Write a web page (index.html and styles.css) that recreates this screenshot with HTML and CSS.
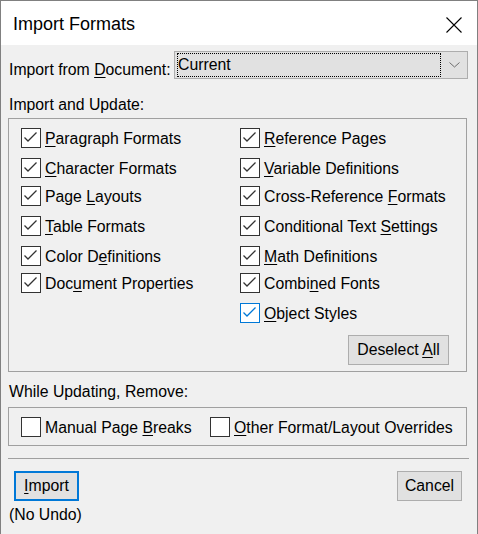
FILE: index.html
```html
<!DOCTYPE html>
<html lang="en">
<head>
  <meta charset="UTF-8">
  <title>Import Formats</title>
  <link rel="stylesheet" href="styles.css">
</head>
<body>
  <div class="window">
    <div class="titlebar">
      <span class="title">Import Formats</span>
      <svg class="close" width="16" height="16" viewBox="0 0 16 16">
        <path d="M0.5 0.5 L15.5 15.5 M15.5 0.5 L0.5 15.5" stroke="#000" stroke-width="1.1" fill="none"/>
      </svg>
    </div>
    <div class="content">
      <div class="doc-row">
        <span class="label">Import from <u>D</u>ocument:</span>
        <div class="select">
          <div class="select-value">Current</div>
          <div class="select-arrow">
            <svg width="11" height="6" viewBox="0 0 11 6">
              <path d="M0.5 0.5 L5.5 5 L10.5 0.5" stroke="#6d6d6d" stroke-width="1" fill="none"/>
            </svg>
          </div>
        </div>
      </div>

      <div class="heading first">Import and Update:</div>
      <div class="group update-group">
        <div class="check-grid">
          <label class="check"><span class="box checked"></span><span><u>P</u>aragraph Formats</span></label>
          <label class="check"><span class="box checked"></span><span><u>R</u>eference Pages</span></label>
          <label class="check"><span class="box checked"></span><span><u>C</u>haracter Formats</span></label>
          <label class="check"><span class="box checked"></span><span><u>V</u>ariable Definitions</span></label>
          <label class="check"><span class="box checked"></span><span>Page <u>L</u>ayouts</span></label>
          <label class="check"><span class="box checked"></span><span>Cross-Reference <u>F</u>ormats</span></label>
          <label class="check"><span class="box checked"></span><span><u>T</u>able Formats</span></label>
          <label class="check"><span class="box checked"></span><span>Conditional Text <u>S</u>ettings</span></label>
          <label class="check"><span class="box checked"></span><span>Color D<u>e</u>finitions</span></label>
          <label class="check"><span class="box checked"></span><span><u>M</u>ath Definitions</span></label>
          <label class="check"><span class="box checked"></span><span>Doc<u>u</u>ment Properties</span></label>
          <label class="check"><span class="box checked"></span><span>Combi<u>n</u>ed Fonts</span></label>
          <span></span>
          <label class="check"><span class="box checked focus"></span><span><u>O</u>bject Styles</span></label>
        </div>
        <div class="group-actions">
          <button class="btn deselect">Deselect <u>A</u>ll</button>
        </div>
      </div>

      <div class="heading second">While Updating, Remove:</div>
      <div class="group remove-group">
        <label class="check breaks"><span class="box"></span><span>Manual Page <u>B</u>reaks</span></label>
        <label class="check"><span class="box"></span><span><u>O</u>ther Format/Layout Overrides</span></label>
      </div>

      <div class="separator"></div>

      <div class="buttons">
        <button class="btn default"><u>I</u>mport</button>
        <button class="btn">Cancel</button>
      </div>
      <div class="note">(No Undo)</div>
    </div>
  </div>
</body>
</html>
```

FILE: styles.css
```css
body {
  margin: 0;
  background-color: #f0f0f0;
  font-family: "Liberation Sans", Arial, sans-serif;
  font-size: 15.8px;
  line-height: 18px;
  color: #000;
}
u {
  text-decoration: underline;
  text-underline-offset: 2px;
}
.window {
  width: 478px;
  height: 534px;
  box-sizing: border-box;
  border: 1px solid #808080;
  border-bottom: none;
  background-color: #f0f0f0;
  overflow: hidden;
}
.titlebar {
  height: 44px;
  background-color: #fff;
  display: flex;
  justify-content: space-between;
  align-items: flex-start;
}
.title {
  font-size: 18px;
  line-height: 21px;
  margin: 13px 0 0 12px;
}
.close {
  margin: 16px 15px 0 0;
}
.content {
  padding: 0 0 0 7px;
}
.doc-row {
  display: flex;
  align-items: flex-start;
  margin-top: 6px;
}
.label {
  width: 165px;
  margin: 10px 0 0 1px;
  white-space: nowrap;
}
.select {
  width: 294px;
  height: 28px;
  box-sizing: border-box;
  border: 1px solid #adadad;
  background-color: #e1e1e1;
  padding: 1px 1px 1px 2px;
  display: flex;
}
.select-value {
  width: 264px;
  height: 24px;
  box-sizing: border-box;
  border: 1px dotted #000;
  padding: 2px 0 0 0;
}
.select-arrow {
  flex: 1;
  display: flex;
  align-items: center;
  justify-content: center;
  padding-left: 2px;
}
.heading {
  padding-left: 1px;
}
.heading.first {
  margin-top: 17px;
}
.heading.second {
  margin-top: 11px;
}
.group {
  width: 459px;
  box-sizing: border-box;
  border: 1px solid #a0a0a0;
}
.update-group {
  margin-top: 4px;
  height: 254px;
  padding: 9px 17px 0 12px;
}
.check-grid {
  display: grid;
  grid-template-columns: 219px 1fr;
  grid-template-rows: 30px 28px 30px 30px 27px 30px 20px;
}
.check {
  display: flex;
  align-items: flex-start;
  white-space: nowrap;
}
.check > span:last-child {
  margin: 2px 0 0 4px;
}
.box {
  width: 20px;
  height: 20px;
  box-sizing: border-box;
  border: 1px solid #333;
  background-color: #fff;
  flex: none;
}
.box.checked {
  background: #fff url("data:image/svg+xml,%3Csvg xmlns='http://www.w3.org/2000/svg' width='18' height='18' viewBox='0 0 18 18'%3E%3Cpath d='M2.5 8.5 L6 12 L14.5 3.5' stroke='%23333' stroke-width='1.3' fill='none'/%3E%3C/svg%3E") no-repeat center;
}
.box.checked.focus {
  border-color: #0078d7;
  background-image: url("data:image/svg+xml,%3Csvg xmlns='http://www.w3.org/2000/svg' width='18' height='18' viewBox='0 0 18 18'%3E%3Cpath d='M2.5 8.5 L6 12 L14.5 3.5' stroke='%230078d7' stroke-width='1.3' fill='none'/%3E%3C/svg%3E");
}
.group-actions {
  display: flex;
  justify-content: flex-end;
  margin-top: 12px;
}
.btn {
  font-family: "Liberation Sans", Arial, sans-serif;
  font-size: 15.8px;
  line-height: 18px;
  color: #000;
  height: 30px;
  box-sizing: border-box;
  border: 1px solid #adadad;
  background-color: #e1e1e1;
  padding: 0;
  border-radius: 0;
}
.deselect {
  width: 101px;
}
.remove-group {
  margin-top: 6px;
  height: 39px;
  padding: 9px 0 0 12px;
  display: flex;
}
.check.breaks {
  width: 189px;
}
.separator {
  width: 461px;
  height: 1px;
  background-color: #a0a0a0;
  margin-top: 12px;
}
.buttons {
  display: flex;
  justify-content: space-between;
  margin-top: 12px;
  padding: 0 7px 0 6px;
  width: 461px;
  box-sizing: border-box;
}
.buttons .btn {
  width: 65px;
}
.btn.default {
  border: 2px solid #0078d7;
}
.note {
  margin-top: 5px;
  padding-left: 1px;
}
```
